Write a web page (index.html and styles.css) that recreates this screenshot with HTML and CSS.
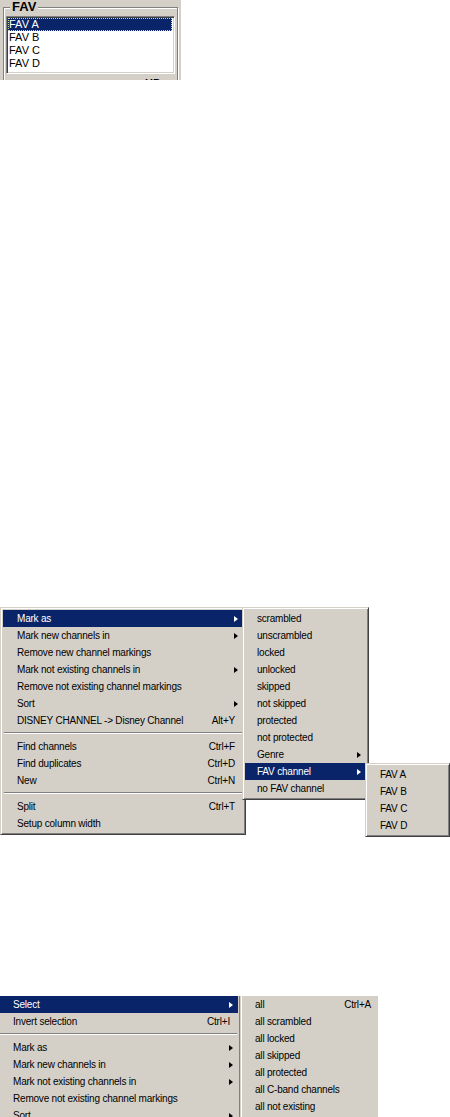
FILE: index.html
```html
<!DOCTYPE html>
<html lang="en">
<head>
    <meta charset="UTF-8">
    <title>Channel menus</title>
    <link rel="stylesheet" href="styles.css">
</head>
<body>
    <!-- favourite list group box -->
    <div class="groupshot">
        <fieldset class="group">
            <legend>FAV</legend>
            <div class="listbox">
                <div class="row sel">FAV A</div>
                <div class="row">FAV B</div>
                <div class="row">FAV C</div>
                <div class="row">FAV D</div>
            </div>
            <div class="cut">HD</div>
        </fieldset>
    </div>

    <!-- context menu: Mark as -> FAV channel -->
    <div class="scene scene-mark">
        <div class="menu main-mark">
            <div class="item hl"><span class="label">Mark as</span><span class="arrow"></span></div>
            <div class="item"><span class="label">Mark new channels in</span><span class="arrow"></span></div>
            <div class="item"><span class="label">Remove new channel markings</span></div>
            <div class="item"><span class="label">Mark not existing channels in</span><span class="arrow"></span></div>
            <div class="item"><span class="label">Remove not existing channel markings</span></div>
            <div class="item"><span class="label">Sort</span><span class="arrow"></span></div>
            <div class="item"><span class="label">DISNEY CHANNEL -&gt; Disney Channel</span><span class="key">Alt+Y</span></div>
            <div class="sep"></div>
            <div class="item"><span class="label">Find channels</span><span class="key">Ctrl+F</span></div>
            <div class="item"><span class="label">Find duplicates</span><span class="key">Ctrl+D</span></div>
            <div class="item"><span class="label">New</span><span class="key">Ctrl+N</span></div>
            <div class="sep"></div>
            <div class="item"><span class="label">Split</span><span class="key">Ctrl+T</span></div>
            <div class="item"><span class="label">Setup column width</span></div>
        </div>

        <div class="menu sub sub-mark">
            <div class="item"><span class="label">scrambled</span></div>
            <div class="item"><span class="label">unscrambled</span></div>
            <div class="item"><span class="label">locked</span></div>
            <div class="item"><span class="label">unlocked</span></div>
            <div class="item"><span class="label">skipped</span></div>
            <div class="item"><span class="label">not skipped</span></div>
            <div class="item"><span class="label">protected</span></div>
            <div class="item"><span class="label">not protected</span></div>
            <div class="item"><span class="label">Genre</span><span class="arrow"></span></div>
            <div class="item hl"><span class="label">FAV channel</span><span class="arrow"></span></div>
            <div class="item"><span class="label">no FAV channel</span></div>
        </div>

        <div class="menu sub sub-fav">
            <div class="item"><span class="label">FAV A</span></div>
            <div class="item"><span class="label">FAV B</span></div>
            <div class="item"><span class="label">FAV C</span></div>
            <div class="item"><span class="label">FAV D</span></div>
        </div>
    </div>

    <!-- context menu: Select -->
    <div class="scene scene-select">
        <div class="menu main-select">
            <div class="item hl"><span class="label">Select</span><span class="arrow"></span></div>
            <div class="item"><span class="label">Invert selection</span><span class="key">Ctrl+I</span></div>
            <div class="sep"></div>
            <div class="item"><span class="label">Mark as</span><span class="arrow"></span></div>
            <div class="item"><span class="label">Mark new channels in</span><span class="arrow"></span></div>
            <div class="item"><span class="label">Mark not existing channels in</span><span class="arrow"></span></div>
            <div class="item"><span class="label">Remove not existing channel markings</span></div>
            <div class="item"><span class="label">Sort</span><span class="arrow"></span></div>
        </div>

        <div class="menu sub sub-select">
            <div class="item"><span class="label">all</span><span class="key">Ctrl+A</span></div>
            <div class="item"><span class="label">all scrambled</span></div>
            <div class="item"><span class="label">all locked</span></div>
            <div class="item"><span class="label">all skipped</span></div>
            <div class="item"><span class="label">all protected</span></div>
            <div class="item"><span class="label">all C-band channels</span></div>
            <div class="item"><span class="label">all not existing</span></div>
        </div>
    </div>
</body>
</html>
```

FILE: styles.css
```css
* {
    box-sizing: border-box;
}
body {
    margin: 0;
    background: #fff;
    font-family: "Liberation Sans", Arial, sans-serif;
    font-size: 11px;
    color: #000;
}

/* group box with list */
.groupshot {
    width: 181px;
    height: 80px;
    background: #d4d0c8;
    overflow: hidden;
}
.group {
    margin: 0 0 0 3px;
    width: 175px;
    min-width: 0;
    min-height: 120px;
    padding: 0 1px 0 2px;
    border: 1px solid #808080;
    box-shadow: inset 1px 1px #fff, 1px 1px #fff;
}
.group legend {
    font-size: 13px;
    font-weight: bold;
    line-height: 14px;
    margin-left: 4px;
    padding: 0 2px;
    background: #d4d0c8;
}
.listbox {
    margin-top: 2px;
    width: 169px;
    background: #fff;
    border: 1px solid;
    border-color: #808080 #fff #fff #808080;
    box-shadow: inset 1px 1px #404040, inset -1px -1px #d4d0c8;
    padding: 1px 2px 3px 1px;
}
.row {
    height: 13px;
    line-height: 13px;
    padding-left: 1px;
}
.row.sel {
    background: #0a246a;
    color: #fff;
    outline: 1px dotted #d8d890;
    outline-offset: -1px;
}
.cut {
    margin-top: 3px;
    padding-left: 139px;
    line-height: 13px;
    font-weight: bold;
}

/* popup menus */
.scene {
    position: relative;
    font-size: 10px;
    letter-spacing: -0.2px;
}
.scene-mark {
    margin-top: 527px;
    height: 230px;
}
.scene-select {
    margin-top: 159px;
    width: 378px;
    height: 121px;
    overflow: hidden;
}
.menu {
    background: #d4d0c8;
    border: 1px solid;
    border-color: #d4d0c8 #404040 #404040 #d4d0c8;
    box-shadow: inset 1px 1px #fff, inset -1px -1px #808080;
    padding: 2px;
}
.item {
    display: flex;
    align-items: center;
    height: 17px;
    padding: 0 5px 0 14px;
    white-space: nowrap;
}
.item .label {
    flex: 1;
}
.item .key {
    margin-right: 3px;
}
.item .arrow {
    width: 0;
    height: 0;
    border-left: 4px solid #000;
    border-top: 3.5px solid transparent;
    border-bottom: 3.5px solid transparent;
}
.item.hl {
    background: #0a246a;
    color: #fff;
}
.item.hl .arrow {
    border-left-color: #fff;
}
.sep {
    height: 9px;
    padding-top: 3px;
    margin: 0 1px;
}
.sep::before {
    content: "";
    display: block;
    border-top: 1px solid #808080;
    border-bottom: 1px solid #fff;
}
.menu.sub .item {
    padding-left: 12px;
}

.main-mark {
    width: 246px;
}
.sub-mark {
    position: absolute;
    left: 242px;
    top: 0;
    width: 127px;
}
.sub-fav {
    position: absolute;
    left: 365px;
    top: 156px;
    width: 85px;
}
.main-select {
    margin: -3px 0 0 -4px;
    width: 245px;
}
.sub-select {
    position: absolute;
    left: 240px;
    top: -3px;
    width: 142px;
    height: 140px;
}
```
